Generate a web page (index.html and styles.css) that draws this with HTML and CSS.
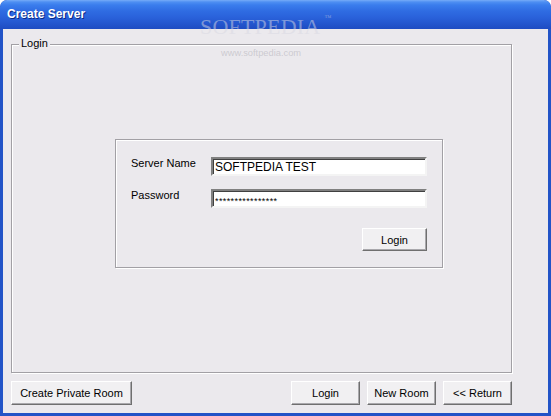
FILE: index.html
```html
<!DOCTYPE html>
<html lang="en">
<head>
    <meta charset="UTF-8">
    <title>Create Server</title>
    <link rel="stylesheet" href="styles.css">
</head>
<body>

    <div class="window">
        <div class="titlebar">Create Server</div>

        <div class="client">
            <div class="group">
                <span class="group-label">Login</span>

                <div class="panel">
                    <div class="form-grid">
                        <label for="serverName">Server Name</label>
                        <input type="text" id="serverName" class="field" value="SOFTPEDIA TEST">

                        <label for="password">Password</label>
                        <input type="text" id="password" class="field field-pass" value="****************">
                    </div>
                    <div class="panel-actions">
                        <button class="btn btn-panel">Login</button>
                    </div>
                </div>
            </div>

            <div class="button-row">
                <button class="btn btn-wide">Create Private Room</button>
                <div class="button-right">
                    <button class="btn btn-small">Login</button>
                    <button class="btn btn-small">New Room</button>
                    <button class="btn btn-small">&lt;&lt; Return</button>
                </div>
            </div>
        </div>

        <!-- watermark over the window -->
        <div class="watermark">SOFTPEDIA<sup>™</sup></div>
        <div class="watermark-url">www.softpedia.com</div>
    </div>

</body>
</html>
```

FILE: styles.css
```css
body {
    margin: 0;
    padding: 0;
    background-color: #ffffff;
    font-family: "Liberation Sans", Arial, sans-serif;
    font-size: 11px;
    color: #000;
}
.window {
    position: relative;
    width: 551px;
    height: 416px;
    background-color: #2253c7;
    border-radius: 7px 7px 0 0;
    display: flex;
    flex-direction: column;
    overflow: hidden;
}
.titlebar {
    height: 29px;
    flex: none;
    display: flex;
    align-items: center;
    padding-left: 7px;
    box-sizing: border-box;
    padding-bottom: 2px;
    color: #fff;
    font-weight: bold;
    font-size: 12px;
    text-shadow: 1px 1px 0 #0c2a86;
    background: linear-gradient(to bottom, #76acf8 0, #4e8ff2 2px, #3a7ded 5px, #2f6ce2 11px, #2a62db 17px, #2457cf 23px, #1e4cc2 29px);
    border-radius: 7px 7px 0 0;
}
.client {
    flex: 1;
    margin: 0 3px 3px 3px;
    background-color: #ebe9ed;
    padding: 15px 36px 8px 8px;
    display: flex;
    flex-direction: column;
    gap: 8px;
}
.group {
    position: relative;
    flex: 1;
    border: 1px solid #a2a0a5;
    box-shadow: 1px 1px 0 #fff, inset 1px 1px 0 #fff;
    padding: 94px 0 0 103px;
}
.group-label {
    position: absolute;
    top: -8px;
    left: 7px;
    padding: 0 2px;
    background-color: #ebe9ed;
}
.panel {
    width: 328px;
    height: 129px;
    box-sizing: border-box;
    border: 1px solid #a2a0a5;
    box-shadow: 1px 1px 0 #fff, inset 1px 1px 0 #fff;
    padding: 17px 15px 0 15px;
}
.form-grid {
    display: grid;
    grid-template-columns: 80px 216px;
    grid-auto-rows: 19px;
    row-gap: 13px;
    align-items: center;
}
.form-grid label {
    align-self: start;
    line-height: 13px;
}
.field {
    box-sizing: border-box;
    width: 216px;
    height: 19px;
    margin: 0;
    padding: 1px 2px 0 2px;
    font-family: "Liberation Sans", Arial, sans-serif;
    font-size: 12px;
    color: #000;
    background-color: #fff;
    border: 2px solid;
    border-color: #808080 #f4f4f4 #f4f4f4 #808080;
    box-shadow: inset 1px 1px 0 #404040;
    outline: none;
}
.field-pass {
    font-size: 9px;
    letter-spacing: 0.4px;
    padding-top: 5px;
}
.panel-actions {
    display: flex;
    justify-content: flex-end;
    margin-top: 20px;
}
.btn {
    box-sizing: border-box;
    height: 24px;
    margin: 0;
    padding: 0;
    font-family: "Liberation Sans", Arial, sans-serif;
    font-size: 11px;
    color: #000;
    background-color: #f1f0f2;
    border: 1px solid;
    border-color: #fff #6f6f6f #6f6f6f #fff;
    box-shadow: inset -1px -1px 0 #a9a8ac;
    cursor: pointer;
}
.btn-panel {
    width: 65px;
    height: 23px;
}
.button-row {
    display: flex;
    justify-content: space-between;
    height: 24px;
}
.button-right {
    display: flex;
    gap: 7px;
}
.btn-wide {
    width: 121px;
}
.btn-small {
    width: 69px;
}
.watermark {
    position: absolute;
    top: 14px;
    left: 200px;
    font-family: "Liberation Serif", "Times New Roman", serif;
    font-size: 22px;
    color: rgba(215, 215, 225, 0.5);
    letter-spacing: 0.2px;
    pointer-events: none;
}
.watermark sup {
    font-size: 7px;
    vertical-align: 14px;
    margin-left: 4px;
}
.watermark-url {
    position: absolute;
    top: 48px;
    left: 221px;
    font-size: 9.3px;
    color: rgba(190, 188, 196, 0.7);
    pointer-events: none;
}
```
